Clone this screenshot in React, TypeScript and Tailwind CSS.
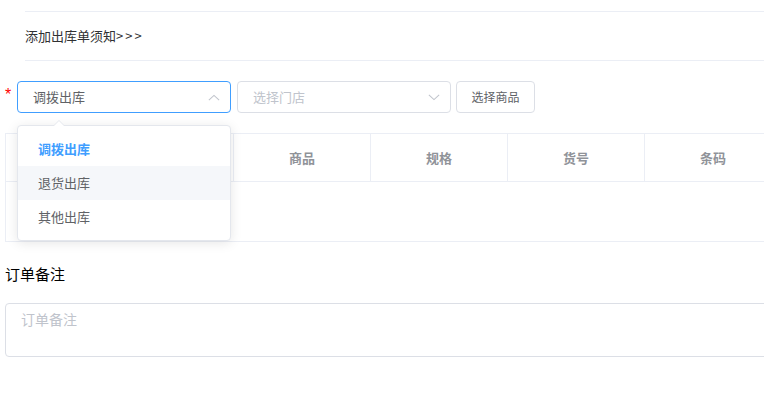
const font = "font-['Microsoft_YaHei','Noto_Sans_CJK_SC',sans-serif]";

const COLUMNS = ["商品", "规格", "货号", "条码"];
const OPTIONS = ["调拨出库", "退货出库", "其他出库"];

function Chevron({ up, className }: { up?: boolean; className?: string }) {
  return (
    <svg viewBox="0 0 14 8" className={className} fill="none" stroke="currentColor" strokeWidth="1.2">
      {up ? <polyline points="1,7 7,1.5 13,7" /> : <polyline points="1,1 7,6.5 13,1" />}
    </svg>
  );
}

export default function App() {
  return (
    <div className={`relative h-[400px] w-[764px] overflow-hidden bg-white ${font}`}>
      <div className="ml-[25px] mt-[11px] flex h-[50px] w-[800px] items-center border-y border-[#ebeef5] text-[13px] text-[#303133]">
        添加出库单须知<span className="tracking-[2px]">&gt;&gt;&gt;</span>
      </div>

      <div className="mt-[20px] flex items-center">
        <span className="w-[17px] pl-[5px] pb-[4px] font-['Liberation_Sans',sans-serif] text-[16px] leading-none text-[#f00]">*</span>
        <div className="flex h-[32px] w-[214px] items-center justify-between rounded-[4px] border border-[#409eff] pl-[15px] pr-[10px] text-[13px] text-[#606266]">
          <span>调拨出库</span>
          <Chevron up className="h-[7px] w-[12px] text-[#c0c4cc]" />
        </div>
        <div className="ml-[6px] flex h-[32px] w-[214px] items-center justify-between rounded-[4px] border border-[#dcdfe6] pl-[15px] pr-[10px] text-[13px] text-[#c0c4cc]">
          <span>选择门店</span>
          <Chevron className="h-[7px] w-[12px] text-[#c0c4cc]" />
        </div>
        <button className="ml-[5px] h-[32px] w-[79px] rounded-[4px] border border-[#dcdfe6] text-[12px] text-[#606266]">
          选择商品
        </button>
      </div>

      <div className="ml-[5px] mt-[20px] w-[820px] border border-[#ebeef5]">
        <div className="flex h-[48px] border-b border-[#ebeef5] text-[13px] font-bold text-[#909399]">
          <div className="w-[228px] border-r border-[#ebeef5]" />
          {COLUMNS.map((c) => (
            <div key={c} className="flex w-[137px] items-center justify-center border-r border-[#ebeef5]">
              {c}
            </div>
          ))}
        </div>
        <div className="h-[59px]" />
      </div>

      <div className="ml-[5px] mt-[21px] text-[15px] text-[#000]">订单备注</div>
      <div className="ml-[5px] mt-[17px] h-[54px] w-[820px] rounded-[4px] border border-[#dcdfe6] px-[15px] pt-[5px] text-[14px] text-[#c0c4cc]">
        订单备注
      </div>

      <div className="absolute left-[17px] top-[125px] w-[214px] rounded-[4px] border border-[#e4e7ed] bg-white py-[6px] shadow-[0_2px_12px_0_rgba(0,0,0,0.1)]">
        <div className="absolute -top-[6px] left-[35px] h-0 w-0 border-x-[6px] border-b-[6px] border-x-transparent border-b-[#e4e7ed]" />
        <div className="absolute -top-[5px] left-[35px] h-0 w-0 border-x-[6px] border-b-[6px] border-x-transparent border-b-white" />
        {OPTIONS.map((o, i) => (
          <div
            key={o}
            className={`flex h-[34px] items-center px-[20px] text-[13px] ${
              i === 0 ? "font-bold text-[#409eff]" : "text-[#606266]"
            } ${i === 1 ? "bg-[#f5f7fa]" : ""}`}
          >
            {o}
          </div>
        ))}
      </div>
    </div>
  );
}
